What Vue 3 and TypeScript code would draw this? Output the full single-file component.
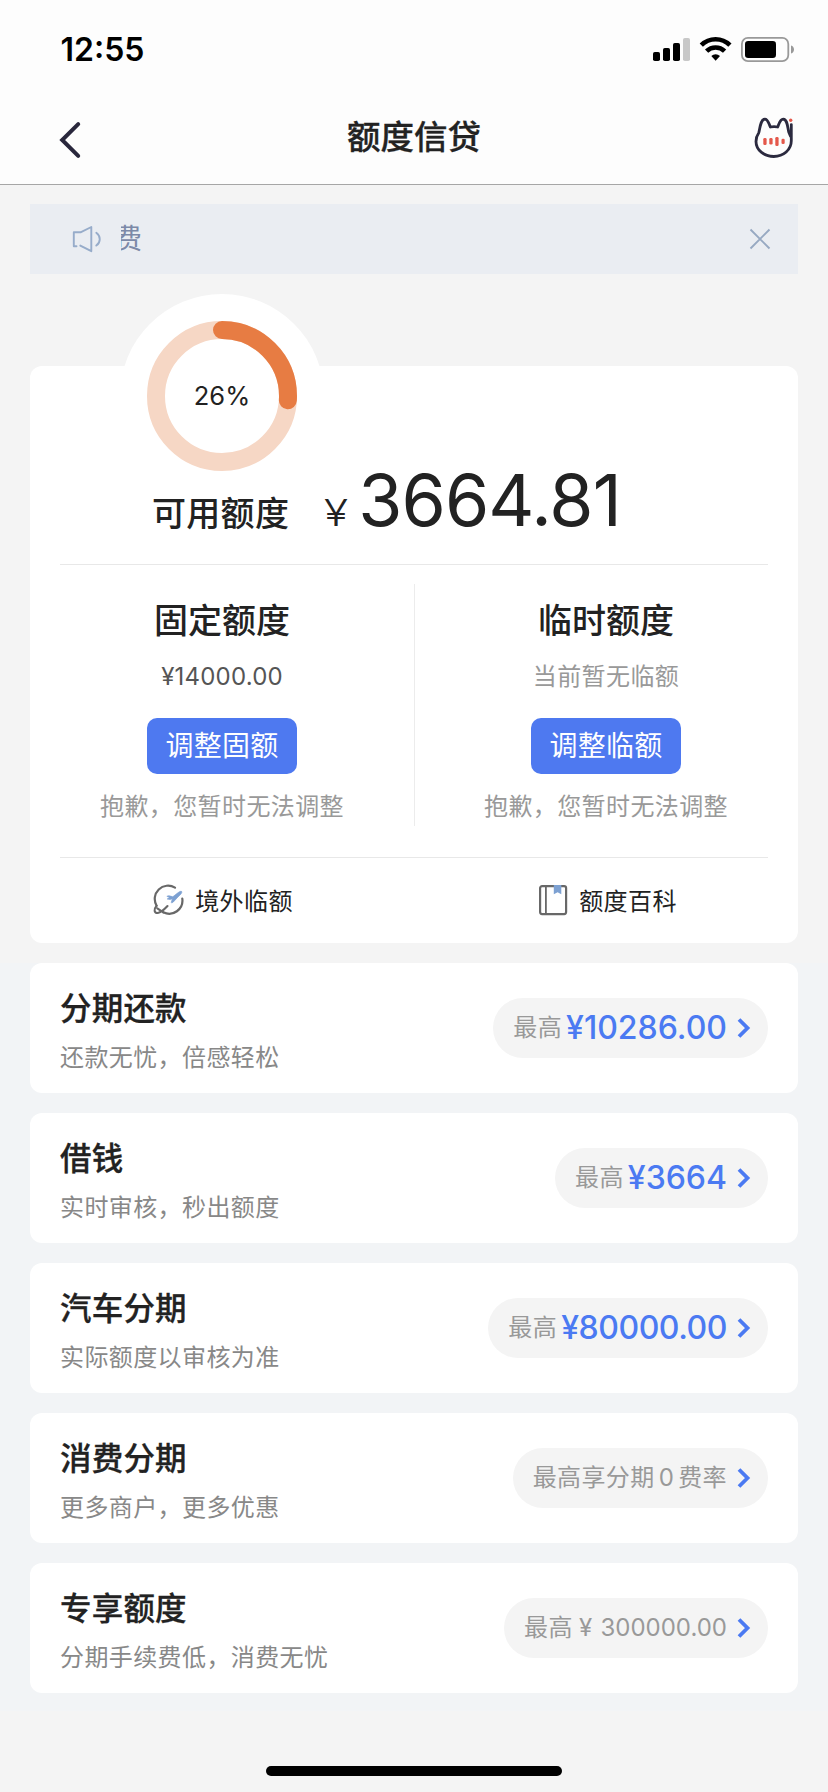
<script setup lang="ts">
interface Offer {
  title: string
  desc: string
  label: string
  amount?: string
  kind: 'money' | 'rate' | 'plain'
  tight?: boolean
}

const percent = 26
const radius = 66
const circumference = 2 * Math.PI * radius
const dash = `${(circumference * percent) / 100} ${circumference}`

const columns = [
  { title: '固定额度', value: '¥14000.00', muted: false, action: '调整固额' },
  { title: '临时额度', value: '当前暂无临额', muted: true, action: '调整临额' },
]

const offers: Offer[] = [
  { title: '分期还款', desc: '还款无忧，倍感轻松', label: '最高', amount: '¥10286.00', kind: 'money' },
  { title: '借钱', desc: '实时审核，秒出额度', label: '最高', amount: '¥3664', kind: 'money' },
  { title: '汽车分期', desc: '实际额度以审核为准', label: '最高', amount: '¥80000.00', kind: 'money', tight: true },
  { title: '消费分期', desc: '更多商户，更多优惠', label: '最高享分期', kind: 'rate' },
  { title: '专享额度', desc: '分期手续费低，消费无忧', label: '最高', amount: '300000.00', kind: 'plain' },
]
</script>

<template>
  <div class="page">
    <header class="header">
      <div class="status">
        <span class="clock">12:55</span>
        <svg class="status-icons" width="144" height="28" viewBox="0 0 144 28">
          <rect x="3" y="17" width="7" height="9" rx="1.8" />
          <rect x="13" y="13" width="7" height="13" rx="1.8" />
          <rect x="23" y="8" width="7" height="18" rx="1.8" />
          <rect x="33" y="3" width="7" height="23" rx="1.8" fill="#c8c8c8" />
          <g fill="none" stroke="#000" stroke-width="4.6">
            <path d="M51.3 10.1a20.3 20.3 0 0 1 28.6 0" />
            <path d="M56.6 16.2a12.8 12.8 0 0 1 18 0" />
          </g>
          <path d="M61.3 20.9a6.4 6.4 0 0 1 8.7 0l-4.35 4.8z" />
          <rect x="91.9" y="2.9" width="46.4" height="23.2" rx="6" fill="none" stroke="#999" stroke-width="1.8" />
          <rect x="95" y="6" width="31" height="17" rx="3.2" />
          <path d="M141 10.6c4 1 4 7 0 8z" fill="#999" />
        </svg>
      </div>
      <div class="nav">
        <svg class="back" width="24" height="40" viewBox="0 0 24 40">
          <path d="M20.2 4.2 4.2 20l16 15.8" fill="none" stroke="#29273c" stroke-width="4" stroke-linecap="round" stroke-linejoin="miter" />
        </svg>
        <h1 class="nav-title">额度信贷</h1>
        <svg class="cat" width="44" height="46" viewBox="0 0 44 46">
          <path
            d="M39.3 8.6v16.2c0 9-7.8 15.7-17.5 15.7S4 33.9 4 25.4c0-3.200.9-6 2.800-8.700C8 12.800 8.300 3.400 12.900 3.100c3.100-.1 3.500 3.900 5.500 7.900 2.300-.6 4.900-.6 7.300 0 1.800-4.200 2.500-8 5.500-7.900 4.200.3 4.300 7.600 5.600 13.200l1.700 4"
            fill="none" stroke="#2b2a3f" stroke-width="2.8" stroke-linecap="round" stroke-linejoin="round"
          />
          <g fill="#e4584b">
            <rect x="11.3" y="22" width="3.3" height="7" rx="1.3" />
            <rect x="17.3" y="22" width="3.3" height="6.6" rx="1.3" />
            <rect x="23.3" y="21" width="3.3" height="9" rx="1.3" />
            <rect x="29.5" y="22.8" width="3.2" height="5.2" rx="1.3" />
            <circle cx="38.7" cy="4.3" r="1.7" />
          </g>
        </svg>
      </div>
    </header>

    <main class="content">
      <section class="notice">
        <svg width="30" height="30" viewBox="0 0 30 30" fill="none" stroke="#97acca" stroke-width="1.9" stroke-linecap="round" stroke-linejoin="round">
          <path d="M4.5 22.3H1.8V8.3h6.7L19.3 3v24.2L8.3 21.6" />
          <path d="M24.3 8.8c4.6 3.4 4.6 9.4 0 12.8" />
        </svg>
        <div class="ticker"><span class="ticker-text">费</span></div>
        <svg class="close" width="22" height="22" viewBox="0 0 22 22">
          <path d="m1.5 1.5 19 19m0-19-19 19" fill="none" stroke="#97a9c2" stroke-width="1.9" />
        </svg>
      </section>

      <section class="card summary">
        <div class="gauge">
          <svg width="150" height="150" viewBox="0 0 150 150">
            <circle cx="75" cy="75" :r="radius" fill="none" stroke="#f6d7c5" stroke-width="18" />
            <circle
              cx="75" cy="75" :r="radius" fill="none" stroke="#e77c43" stroke-width="18"
              stroke-linecap="round" :stroke-dasharray="dash" transform="rotate(-90 75 75)"
            />
          </svg>
          <span class="percent">{{ percent }}%</span>
        </div>

        <div class="available">
          <span class="available-label">可用额度</span>
          <span class="yen">¥</span>
          <span class="available-amount">3664.81</span>
        </div>

        <div class="columns">
          <div v-for="col in columns" :key="col.title" class="column">
            <h2 class="column-title">{{ col.title }}</h2>
            <p class="column-value" :class="{ muted: col.muted }">{{ col.value }}</p>
            <button class="adjust" type="button">{{ col.action }}</button>
            <p class="column-hint">抱歉，您暂时无法调整</p>
          </div>
        </div>

        <div class="links">
          <a class="link">
            <svg width="32" height="32" viewBox="0 0 32 32" fill="none" stroke-linecap="round" stroke-linejoin="round">
              <path d="M22 3.6A13.3 13.3 0 0 0 3.6 21.7M29.3 14.7A13.2 13.2 0 0 1 10.3 28.3" stroke="#686868" stroke-width="2.2" />
              <path d="M3.6 21.7c-3 3.7-2.6 7.5 1.2 7.3 3.2-.5 6.5-3.6 9.7-7M4.3 24.3l6 4" stroke="#686868" stroke-width="2.1" />
              <path d="M14.2 12.2c1.2-.7 2.600-.3 5.600.6l5.400-4.200c2.500-1.900 4.600-1.700 3.200.7-.7 1.200-2 2.300-3.400 3.600l-4.600 5c-1.400 1.200-2.500 1.200-2 .1l1-3.200-2.400.6-2.800-.4 2.200-1.400z" fill="#7da1d2" stroke="#7da1d2" stroke-width=".7" />
            </svg>
            <span>境外临额</span>
          </a>
          <a class="link">
            <svg width="32" height="32" viewBox="0 0 32 32" fill="none">
              <rect x="3.1" y="2.1" width="26" height="28" rx="2" stroke="#686868" stroke-width="2.2" />
              <path d="M8.9 2v28" stroke="#686868" stroke-width="1.8" />
              <path d="M16.8 1h7.5v9.200l-3.700-2-3.800 2z" fill="#7da1d2" />
            </svg>
            <span>额度百科</span>
          </a>
        </div>
      </section>

      <section class="offers">
        <article v-for="offer in offers" :key="offer.title" class="card offer">
          <div class="offer-text">
            <h3 class="offer-title">{{ offer.title }}</h3>
            <p class="offer-desc">{{ offer.desc }}</p>
          </div>
          <div class="pill">
            <span>{{ offer.label }}</span>
            <span v-if="offer.kind === 'money'" class="pill-amount" :class="{ tight: offer.tight }">{{ offer.amount }}</span>
            <template v-else-if="offer.kind === 'rate'"><span class="zero">0</span><span>费率</span></template>
            <template v-else><span class="pill-yen">¥</span><span class="pill-number">{{ offer.amount }}</span></template>
            <svg class="chevron" width="14" height="20" viewBox="0 0 14 20">
              <path d="m2 1.5 8.5 8.5L2 18.5" fill="none" stroke="#4b7af2" stroke-width="3.8" />
            </svg>
          </div>
        </article>
      </section>
    </main>

    <footer class="home"><div class="home-bar"></div></footer>
  </div>
</template>

<style>
body {
  margin: 0;
  background: #f4f4f4;
}
</style>

<style scoped>
.page {
  width: 828px;
  height: 1792px;
  overflow: hidden;
  display: flex;
  flex-direction: column;
  background: #f4f4f4;
  color: #222;
  font-family: Inter, "Noto Sans CJK SC", sans-serif;
}

h1, h2, h3, p {
  margin: 0;
}

.header {
  height: 184px;
  flex: none;
  background: #fdfdfd;
  border-bottom: 1px solid #a6a6a6;
}

.status {
  height: 88px;
  display: flex;
  justify-content: space-between;
  padding: 0 34px 0 60.5px;
}

.clock {
  padding-top: 30px;
  line-height: 40px;
  font-size: 32px;
  font-weight: 600;
  color: #000;
}

.status-icons {
  margin-top: 35px;
}

.nav {
  height: 95px;
  display: grid;
  grid-template-columns: 1fr auto 1fr;
  align-items: start;
  padding: 0 32px 0 58px;
}

.back {
  margin-top: 32px;
}

.nav-title {
  margin: 29px 26px 0 0;
  font-size: 33.5px;
  line-height: 40px;
  font-weight: 500;
  -webkit-text-stroke: 0.3px #222;
}

.cat {
  margin-top: 28px;
  justify-self: end;
}

.content {
  padding: 19px 30px 0;
}

.notice {
  height: 70px;
  display: flex;
  align-items: center;
  padding: 0 27px 0 42px;
  background: #eaedf2;
}

.ticker {
  flex: 1;
  margin-left: 19px;
  height: 40px;
  overflow: hidden;
}

.ticker-text {
  display: block;
  margin-left: -7px;
  font-size: 28px;
  line-height: 40px;
  color: #7c89a8;
}

.card {
  background: #fff;
  border-radius: 12px;
}

.summary {
  height: 577px;
  margin-top: 92px;
  position: relative;
}

.gauge {
  position: absolute;
  left: 90px;
  top: -72px;
  width: 204px;
  height: 204px;
  border-radius: 50%;
  background: #fff;
  display: grid;
  place-items: center;
}

.gauge > * {
  grid-area: 1 / 1;
}

.percent {
  font-size: 25.5px;
  line-height: 30px;
}

.available {
  height: 199px;
  box-sizing: border-box;
  margin: 0 30px;
  padding: 88px 0 0 92px;
  display: flex;
  align-items: baseline;
  border-bottom: 1px solid #e8e8e8;
  line-height: 92px;
  position: relative;
}

.available-label {
  font-size: 34px;
  letter-spacing: 0.3px;
  font-weight: 500;
}

.yen {
  margin-left: 35px;
  font-size: 37px;
  font-weight: 300;
  transform: scaleX(1.2);
  transform-origin: left;
}

.available-amount {
  margin-left: 14px;
  font-size: 71.5px;
  letter-spacing: -0.9px;
}

.columns {
  height: 293px;
  box-sizing: border-box;
  margin: 0 30px;
  padding: 19px 0 31px;
  display: grid;
  grid-template-columns: 1fr 1fr;
  border-bottom: 1px solid #e8e8e8;
}

.column {
  display: flex;
  flex-direction: column;
  align-items: center;
}

.column:first-child {
  padding-right: 30px;
}

.column:last-child {
  padding-left: 29px;
  border-left: 1px solid #ececec;
}

.column-title {
  margin-top: 17px;
  font-size: 34px;
  line-height: 40px;
  font-weight: 500;
}

.column-value {
  margin-top: 20px;
  font-size: 24px;
  line-height: 32px;
  letter-spacing: 0.2px;
  color: #555;
}

.column-value.muted,
.column-hint {
  font-size: 24px;
  letter-spacing: 0.4px;
  color: #999;
}

.adjust {
  width: 150px;
  height: 56px;
  margin-top: 25px;
  padding: 0;
  border: 0;
  border-radius: 10px;
  background: #4e79f0;
  color: #fff;
  font: inherit;
  font-size: 28px;
  letter-spacing: 0.3px;
  line-height: 56px;
}

.column-hint {
  margin-top: 17px;
  line-height: 32px;
}

.links {
  height: 83px;
  display: grid;
  grid-template-columns: 1fr 1fr;
}

.link {
  display: flex;
  align-items: center;
  justify-content: center;
  gap: 10px;
  padding-left: 2px;
  font-size: 24px;
  letter-spacing: 0.4px;
}

.offers {
  margin: 20px -30px 0;
  padding: 0 30px 18px;
  display: grid;
  gap: 20px;
  background: #f2f4f6;
}

.offer {
  height: 130px;
  display: flex;
  justify-content: space-between;
  align-items: center;
  box-sizing: border-box;
  padding: 0 30px;
}

.offer-text {
  padding-top: 8px;
}

.offer-title {
  font-size: 31.5px;
  letter-spacing: 0.2px;
  line-height: 44px;
  font-weight: 500;
  -webkit-text-stroke: 0.3px #222;
}

.offer-desc {
  margin-top: 7px;
  font-size: 24px;
  letter-spacing: 0.4px;
  line-height: 40px;
  color: #888;
}

.pill {
  height: 60px;
  box-sizing: border-box;
  padding: 0 17px 0 20px;
  display: flex;
  align-items: center;
  border-radius: 30px;
  background: #f4f4f4;
  color: #999;
  font-size: 24px;
  letter-spacing: 0.4px;
  line-height: 60px;
}

.pill-amount {
  margin-left: 4px;
  font-size: 32px;
  font-weight: 500;
  letter-spacing: 0;
  color: #4b7af2;
}

.pill-amount.tight {
  letter-spacing: -0.45px;
}

.zero {
  margin: 0 4px;
}

.pill-yen {
  margin: 0 8px 0 6px;
}

.pill-number {
  letter-spacing: 0;
}

.chevron {
  margin-left: 10px;
}

.home {
  flex: 1;
  display: flex;
  justify-content: center;
  align-items: flex-end;
  padding-bottom: 16px;
}

.home-bar {
  width: 296px;
  height: 10px;
  border-radius: 5px;
  background: #000;
}
</style>
